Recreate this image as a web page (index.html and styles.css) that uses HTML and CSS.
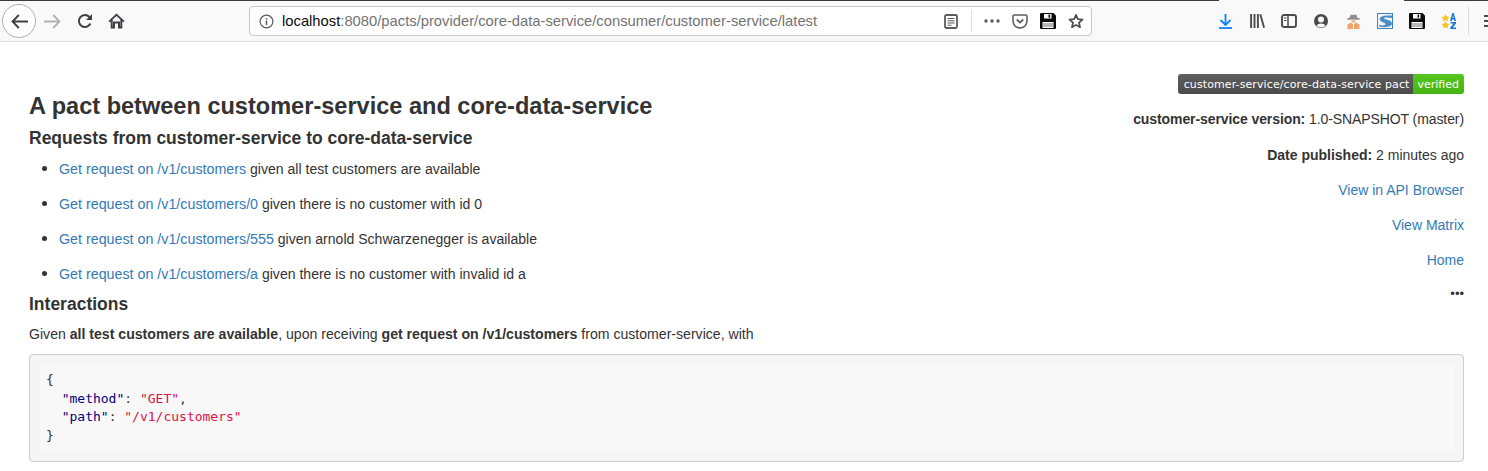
FILE: index.html
```html
<!DOCTYPE html>
<html lang="en">
<head>
<meta charset="utf-8">
<title>Pact</title>
<link rel="stylesheet" href="styles.css">
</head>
<body>
<div class="top-strip">
  <span class="strip-dark s1"></span><span class="s2"></span><span class="strip-dark s3"></span>
</div>
<header class="toolbar">
  <div class="nav">
    <button class="back" aria-label="Back">
      <svg width="17" height="15" viewBox="0 0 17 15"><path d="M7.800 1 1.500 7.500 7.800 14M2 7.500h15" fill="none" stroke="#3f3f44" stroke-width="1.900"/></svg>
    </button>
    <svg class="ic fwd" width="17" height="15" viewBox="0 0 17 15"><path d="M9.200 1 15.500 7.500 9.200 14M15 7.500H0" fill="none" stroke="#b1b1b3" stroke-width="1.800"/></svg>
    <svg class="ic reload" width="16" height="16" viewBox="0 0 16 16"><path d="M13.400 10.500A6 6 0 1 1 12.400 4" fill="none" stroke="#3f3f44" stroke-width="2"/><path d="M15 1v6H9z" fill="#3f3f44"/></svg>
    <svg class="ic home" width="17" height="16" viewBox="0 0 17 16"><path d="M8.500.5.500 8l1.200 1.300 1-.9V15.500h4.300V10.500h3v5h4.300V8.400l1 .9L16.500 8zM4.700 13.500V6.600l3.800-3.500 3.800 3.500v6.900h-.3V8.500H5v5z" fill="#3f3f44" fill-rule="evenodd"/></svg>
  </div>
  <div class="urlbar">
    <svg class="info" width="15" height="15" viewBox="0 0 16 16"><circle cx="8" cy="8" r="6.800" fill="none" stroke="#5b5b60" stroke-width="1.300"/><path d="M7.200 7h1.600v4.800H7.200zM7.200 4.200h1.600v1.600H7.200z" fill="#5b5b60"/></svg>
    <span class="url"><span class="host">localhost</span>:8080/pacts/provider/core-data-service/consumer/customer-service/latest</span>
    <svg class="reader" width="14" height="15" viewBox="0 0 14 15"><rect x="1" y="1" width="12" height="13" rx="1.500" fill="none" stroke="#5b5b60" stroke-width="1.800"/><path d="M3.500 4.500h7M3.500 6.800h7M3.500 9h7M3.500 11.200h4" stroke="#5b5b60" stroke-width="1"/></svg>
    <span class="sep"></span>
    <svg class="dots" width="16" height="4" viewBox="0 0 16 4"><circle cx="2" cy="2" r="1.700" fill="#5b5b60"/><circle cx="8" cy="2" r="1.700" fill="#5b5b60"/><circle cx="14" cy="2" r="1.700" fill="#5b5b60"/></svg>
    <svg class="pocket" width="16" height="15" viewBox="0 0 16 15"><path d="M2.300 1h11.400c.7 0 1.300.6 1.300 1.300V7a7 7 0 0 1-14 0V2.300C1 1.600 1.600 1 2.300 1z" fill="none" stroke="#5b5b60" stroke-width="1.500"/><path d="M4.800 5.500 8 8.600l3.200-3.100" fill="none" stroke="#5b5b60" stroke-width="1.800"/></svg>
    <svg class="save" width="16" height="16" viewBox="0 0 16 16"><path d="M1 0h12.500L16 2.500V15a1 1 0 0 1-1 1H1a1 1 0 0 1-1-1V1a1 1 0 0 1 1-1z" fill="#0c0c0d"/><rect x="4" y="1" width="7.500" height="4.500" fill="#f9f9fa"/><rect x="8.500" y="1.600" width="1.600" height="3" fill="#0c0c0d"/><path d="M2.500 9h11v6h-11z" fill="#f9f9fa"/><path d="M2.500 11h11M2.500 13h11" stroke="#777" stroke-width="1"/></svg>
    <svg class="star" width="16" height="16" viewBox="0 0 17 16"><path d="M8.500 1.500 10.500 6l4.900.5-3.700 3.300 1.100 4.800-4.300-2.500-4.300 2.500 1.100-4.800L1.600 6.500 6.500 6z" fill="none" stroke="#4a4a4f" stroke-width="1.800" stroke-linejoin="round"/></svg>
  </div>
  <div class="tools">
    <svg class="t-down" width="13" height="15" viewBox="0 0 13 15"><path d="M6.500 0v10M1.500 6l5 5 5-5" fill="none" stroke="#0a84ff" stroke-width="1.800"/><path d="M0 14h13" stroke="#0a84ff" stroke-width="1.800"/></svg>
    <svg class="t-lib" width="15" height="14" viewBox="0 0 15 14"><path d="M1.100 0v14M4.500 0v14M7.900 0v14M10.300.3l3.800 13.400" fill="none" stroke="#4a4a4f" stroke-width="1.900"/></svg>
    <svg class="t-side" width="16" height="14" viewBox="0 0 16 14"><rect x="1" y="1" width="14" height="12" rx="2" fill="none" stroke="#4a4a4f" stroke-width="1.900"/><path d="M7 1v12" stroke="#4a4a4f" stroke-width="1.500"/><path d="M3 4h2.500M3 6.500h2.500" stroke="#4a4a4f" stroke-width="1"/></svg>
    <svg class="t-acct" width="14" height="14" viewBox="0 0 14 14"><circle cx="7" cy="7" r="7" fill="#4a4a4f"/><circle cx="7" cy="5.600" r="3" fill="#f9f9fa"/><path d="M2.500 11.500a5 3.600 0 0 1 9 0 6 6 0 0 1-9 0z" fill="#f9f9fa"/></svg>
    <svg class="t-spy" width="13" height="15" viewBox="0 0 13 15"><path d="M3.500 .8h6L10.500 4h-8z" fill="#8f8f93"/><rect x=".5" y="4" width="12" height="1.800" fill="#8f8f93"/><circle cx="6.500" cy="7.200" r="2" fill="#dcc4aa"/><path d="M.5 15v-4.500l3.700-2 1.800 2V15zM12.500 15v-4.500l-3.700-2-1.800 2V15z" fill="#eda56a"/></svg>
    <svg class="t-s" width="16" height="16" viewBox="0 0 16 16"><rect x=".5" y=".5" width="15" height="15" fill="#eef4f9" stroke="#3f83b8"/><path d="M3 7C1.500 3.500 6 2 15 2.500V5c-5-.8-8-.8-8 .6 0 1.200 8 1 8 5 0 3-5 4.500-13 3v-1.500c4 .7 6.500.4 6.500-1C8.500 9.500 4 9.500 3 7z" fill="#4a8fc4"/></svg>
    <svg class="t-save" width="16" height="16" viewBox="0 0 16 16"><path d="M1 0h12.500L16 2.500V15a1 1 0 0 1-1 1H1a1 1 0 0 1-1-1V1a1 1 0 0 1 1-1z" fill="#0c0c0d"/><rect x="4" y="1" width="7.500" height="4.500" fill="#f9f9fa"/><rect x="8.500" y="1.600" width="1.600" height="3" fill="#0c0c0d"/><path d="M2.500 9h11v6h-11z" fill="#f9f9fa"/><path d="M2.500 11h11M2.500 13h11" stroke="#777" stroke-width="1"/></svg>
    <svg class="t-az" width="16" height="16" viewBox="0 0 16 16"><path d="M4.500 1 5.700 3.500 8.500 3.900 6.500 5.800 7 8.500 4.500 7.200 2 8.500 2.500 5.800.5 3.900 3.300 3.500zM4.500 8 5.700 10.500 8.500 10.900 6.500 12.800 7 15.500 4.500 14.200 2 15.500 2.500 12.800.5 10.900 3.300 10.500z" fill="#f5c518"/><path d="M9 8 11.300 0h1.400L15 8h-1.700l-.4-1.600h-1.800L10.700 8zM11.400 5h1.200L12 2.500z" fill="#1877d2" fill-rule="evenodd"/><path d="M9.500 9H15v1.400L11.700 14.500H15V16H9.300v-1.400L12.600 10.500H9.500z" fill="#1877d2"/></svg>
    <span class="t-sep"></span>
    <svg class="t-menu" width="8" height="12" viewBox="0 0 8 12"><path d="M0 1h8M0 6h8M0 11h8" stroke="#4a4a4f" stroke-width="1.800"/></svg>
  </div>
</header>
<main class="page">
  <aside class="meta">
    <div class="badge"><span class="badge-l">customer-service/core-data-service pact</span><span class="badge-r">verified</span></div>
    <div class="meta-row first"><strong>customer-service version:</strong> 1.0-SNAPSHOT (master)</div>
    <div class="meta-row second"><strong>Date published:</strong> 2 minutes ago</div>
    <div class="meta-row"><a href="#">View in API Browser</a></div>
    <div class="meta-row"><a href="#">View Matrix</a></div>
    <div class="meta-row"><a href="#">Home</a></div>
    <div class="more">•••</div>
  </aside>
  <h1>A pact between customer-service and core-data-service</h1>
  <h3>Requests from customer-service to core-data-service</h3>
  <ul>
    <li><a href="#">Get request on /v1/customers</a> given all test customers are available</li>
    <li><a href="#">Get request on /v1/customers/0</a> given there is no customer with id 0</li>
    <li><a href="#">Get request on /v1/customers/555</a> given arnold Schwarzenegger is available</li>
    <li><a href="#">Get request on /v1/customers/a</a> given there is no customer with invalid id a</li>
  </ul>
  <h3 class="interactions">Interactions</h3>
  <p>Given <strong>all test customers are available</strong>, upon receiving <strong>get request on /v1/customers</strong> from customer-service, with</p>
  <pre><code>{
  <span class="k">"method"</span>: <span class="s">"GET"</span>,
  <span class="k">"path"</span>: <span class="s">"/v1/customers"</span>
}</code></pre>
</main>
</body>
</html>
```
FILE: styles.css
```css
* { box-sizing: border-box; }
html, body { margin: 0; padding: 0; height: 471px; overflow: hidden; background: #fff; }
body { font-family: "Liberation Sans", Arial, sans-serif; font-size: 14px; line-height: 20px; color: #333; }
a { color: #337ab7; text-decoration: none; }

.top-strip { display: flex; height: 1px; background: #f9f9fa; }
.strip-dark { background: #3a3a3e; height: 1px; }
.s1 { width: 1219px; }
.s2 { width: 185px; }
.s3 { width: 84px; }

.toolbar { display: flex; align-items: center; height: 41px; background: #f9f9fa; border-bottom: 1px solid #e0e0e1; }
.nav { display: flex; align-items: center; width: 249px; padding-left: 2px; flex: none; }
.back { width: 34px; height: 34px; padding: 0; border: 1px solid #b1b1b3; border-radius: 50%; background: #fff; display: flex; align-items: center; justify-content: center; }
.fwd { margin-left: 8px; }
.reload { margin-left: 16px; }
.home { margin-left: 15px; }

.urlbar { display: flex; align-items: center; width: 843px; height: 30px; flex: none; background: #fff; border: 1px solid #c8c8ca; border-radius: 4px; padding-left: 9px; }
.url { margin-left: 8px; width: 662px; flex: none; font-size: 14.78px; color: #737373; white-space: nowrap; }
.host { color: #0c0c0d; }
.sep { width: 1px; height: 22px; background: #dcdcde; margin-left: 13px; }
.dots { margin-left: 12px; }
.pocket { margin-left: 12px; }
.save { margin-left: 12px; }
.star { margin-left: 12px; }

.tools { display: flex; align-items: center; flex: 1; min-width: 0; padding-left: 127px; overflow: hidden; }
.tools svg { flex: none; }
.t-lib { margin-left: 18px; }
.t-side { margin-left: 16px; }
.t-acct { margin-left: 17px; }
.t-spy { margin-left: 19px; }
.t-s { margin-left: 17px; }
.t-save { margin-left: 16px; }
.t-az { margin-left: 16px; }
.t-sep { width: 1px; height: 28px; flex: none; background: #dcdcde; margin-left: 11px; }
.t-menu { margin-left: 15px; }

.page { padding: 32px 24px 0 29px; }
.meta { float: right; width: 400px; text-align: right; }
.badge { display: flex; justify-content: flex-end; height: 20px; font-family: "DejaVu Sans", sans-serif; font-size: 11px; line-height: 20px; color: #fff; }
.badge-l { background: linear-gradient(#5f5f5f, #4a4a4a); padding: 1px 4px 0 6px; border-radius: 3px 0 0 3px; letter-spacing: .105px; }
.badge-r { background: linear-gradient(#55c51f, #44b512); padding: 1px 5px 0 4px; border-radius: 0 3px 3px 0; }
.meta-row { margin-top: 15px; }
.meta-row.first { letter-spacing: -.09px; }
.meta-row.second { margin-top: 16px; }
.more { margin-top: 17px; font-size: 13px; line-height: 14px; }

h1 { margin: 19px 0 0; font-size: 23.55px; line-height: 26px; font-weight: 700; }
h3 { margin: 9px 0 0; font-size: 17.5px; line-height: 20px; font-weight: 700; }
ul { margin: 11px 0 0; padding-left: 30px; font-size: 14.05px; }
ul a { font-size: 14.28px; }
li { height: 20px; margin-bottom: 15px; }
li::marker { font-size: 17px; }
li:last-child { margin-bottom: 0; }
.interactions { margin-top: 10px; }
p { margin: 10px 0 0; font-size: 14.1px; }
pre { margin: 10px 0 0; padding: 9.5px; background: #f5f5f5; border: 1px solid #ccc; border-radius: 4px; font-family: "DejaVu Sans Mono", monospace; font-size: 13px; line-height: 18.57px; color: #333; }
code { display: block; padding: 6.5px; background: #f8f8f8; font-family: inherit; }
.k { color: #000080; }
.s { color: #dd1144; }
```
